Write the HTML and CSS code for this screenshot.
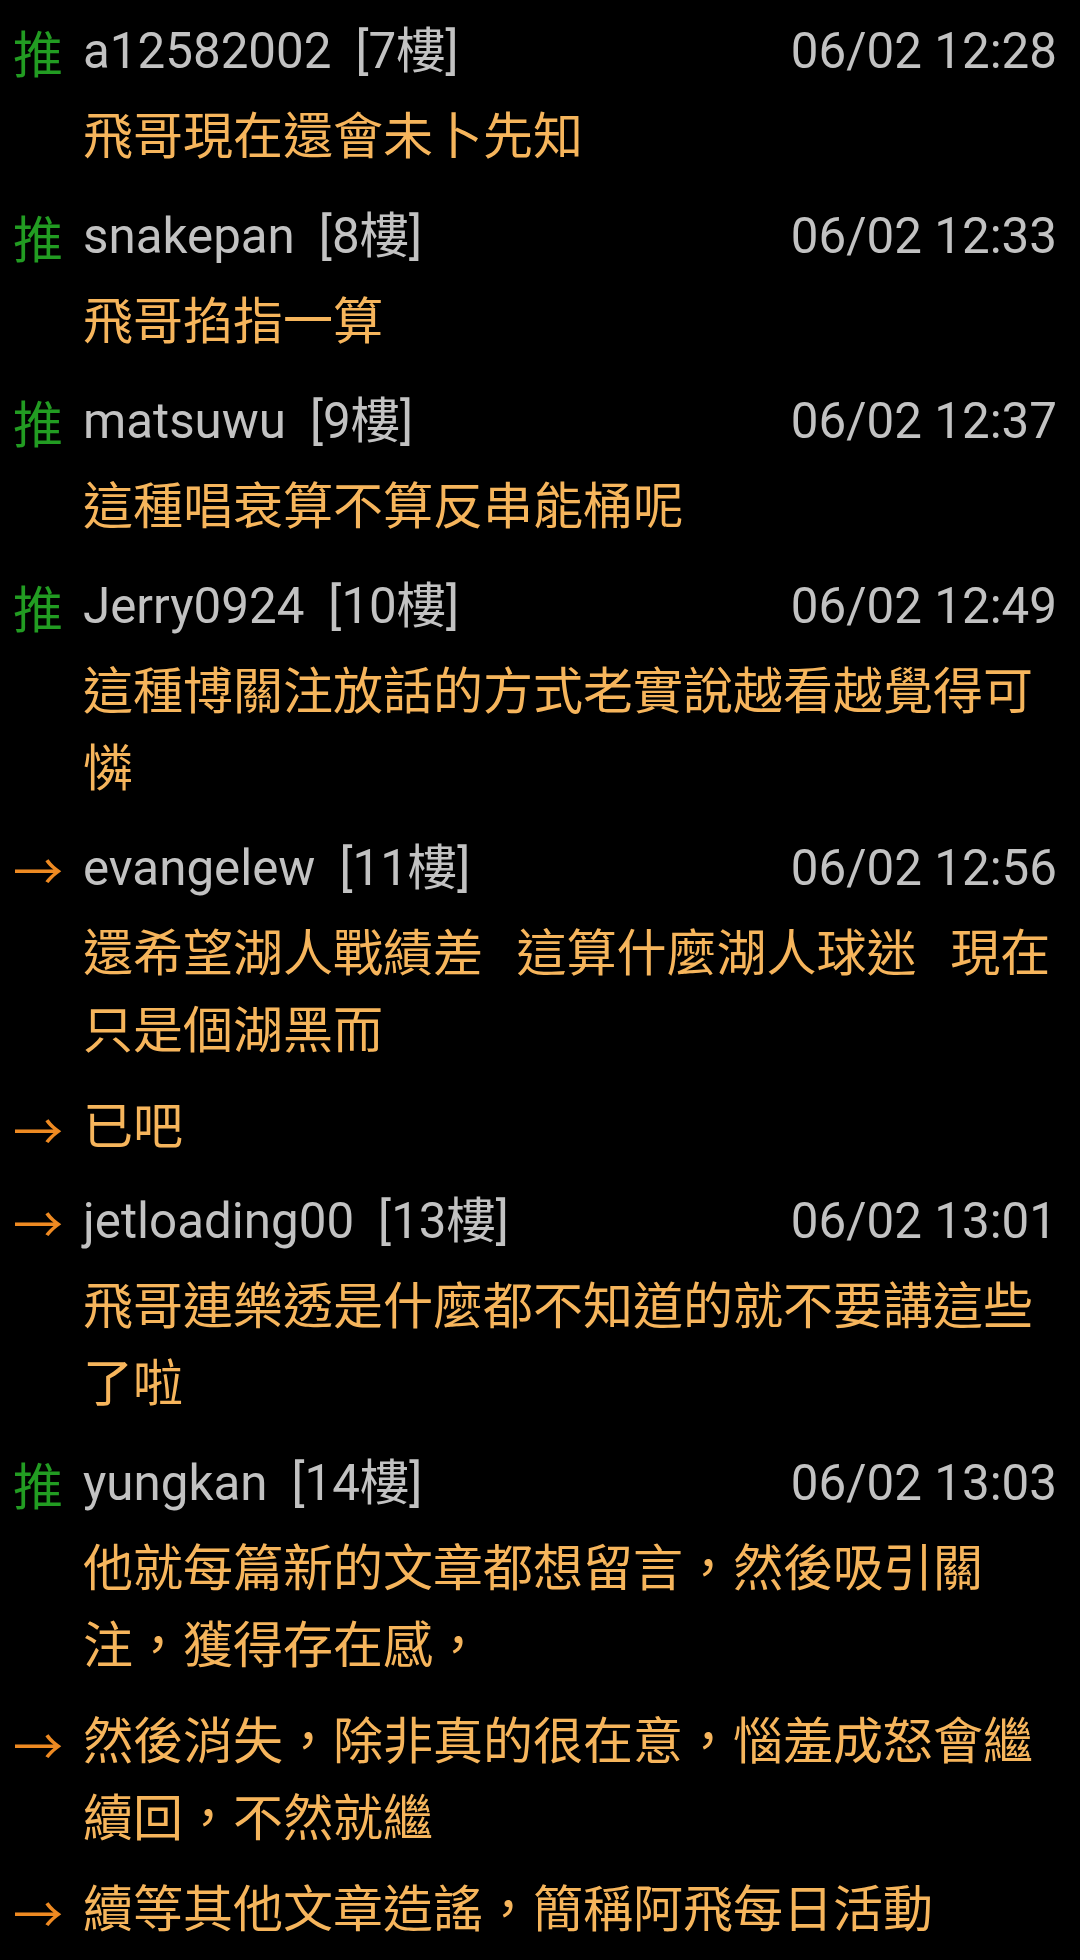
FILE: index.html
```html
<!DOCTYPE html>
<html lang="zh-Hant">
<head>
<meta charset="utf-8">
<title>推文</title>
<link rel="stylesheet" href="styles.css">
</head>
<body>
<div class="thread">
  <div class="comment">
    <div class="head"><span class="tag tag-push">推</span><span class="user">a12582002</span><span class="floor">[7樓]</span><span class="time">06/02 12:28</span></div>
    <p class="text">飛哥現在還會未卜先知</p>
  </div>
  <div class="comment">
    <div class="head"><span class="tag tag-push">推</span><span class="user">snakepan</span><span class="floor">[8樓]</span><span class="time">06/02 12:33</span></div>
    <p class="text">飛哥掐指一算</p>
  </div>
  <div class="comment">
    <div class="head"><span class="tag tag-push">推</span><span class="user">matsuwu</span><span class="floor">[9樓]</span><span class="time">06/02 12:37</span></div>
    <p class="text">這種唱衰算不算反串能桶呢</p>
  </div>
  <div class="comment">
    <div class="head"><span class="tag tag-push">推</span><span class="user">Jerry0924</span><span class="floor">[10樓]</span><span class="time">06/02 12:49</span></div>
    <p class="text">這種博關注放話的方式老實說越看越覺得可憐</p>
  </div>
  <div class="comment">
    <div class="head"><span class="tag tag-arrow">→</span><span class="user">evangelew</span><span class="floor">[11樓]</span><span class="time">06/02 12:56</span></div>
    <p class="text">還希望湖人戰績差   這算什麼湖人球迷   現在只是個湖黑而</p>
  </div>
  <div class="cont">
    <span class="tag tag-arrow">→</span>
    <p class="text">已吧</p>
  </div>
  <div class="comment">
    <div class="head"><span class="tag tag-arrow">→</span><span class="user">jetloading00</span><span class="floor">[13樓]</span><span class="time">06/02 13:01</span></div>
    <p class="text">飛哥連樂透是什麼都不知道的就不要講這些了啦</p>
  </div>
  <div class="comment">
    <div class="head"><span class="tag tag-push">推</span><span class="user">yungkan</span><span class="floor">[14樓]</span><span class="time">06/02 13:03</span></div>
    <p class="text">他就每篇新的文章都想留言，然後吸引關注，獲得存在感，</p>
  </div>
  <div class="cont">
    <span class="tag tag-arrow">→</span>
    <p class="text">然後消失，除非真的很在意，惱羞成怒會繼續回，不然就繼</p>
  </div>
  <div class="cont">
    <span class="tag tag-arrow">→</span>
    <p class="text">續等其他文章造謠，簡稱阿飛每日活動</p>
  </div>
</div>
</body>
</html>
```
FILE: styles.css
```css
html, body {
  margin: 0;
  background: #000;
}

body {
  font-family: Roboto, "Noto Sans CJK TC", sans-serif;
  font-size: 50px;
  overflow: hidden;
}

.thread {
  padding: 0 23px 0 13px;
}

.comment {
  padding: 8px 0 14px;
}

.head {
  display: flex;
  height: 86px;
  line-height: 86px;
  font-size: 49.3px;
  color: #c2c2c2;
  white-space: nowrap;
}

.tag {
  flex: none;
  width: 50px;
  margin-right: 20px;
  font-family: "Noto Sans CJK TC", sans-serif;
  font-size: 50px;
}

.tag-push {
  color: #229c22;
}

.tag-arrow {
  color: #ee8a22;
}

.floor {
  margin-left: 24px;
}

.time {
  margin-left: auto;
}

.text {
  margin: 0 0 0 70px;
  font-family: "Noto Sans CJK TC", Roboto, sans-serif;
  line-height: 77px;
  color: #f6b55c;
  white-space: pre-wrap;
}

.cont {
  display: flex;
  padding: 5px 0 9px;
}

.cont .tag {
  line-height: 77px;
  margin-top: 6px;
  margin-bottom: -6px;
}

.cont .text {
  flex: 1;
  min-width: 0;
  margin-left: 0;
}
```
